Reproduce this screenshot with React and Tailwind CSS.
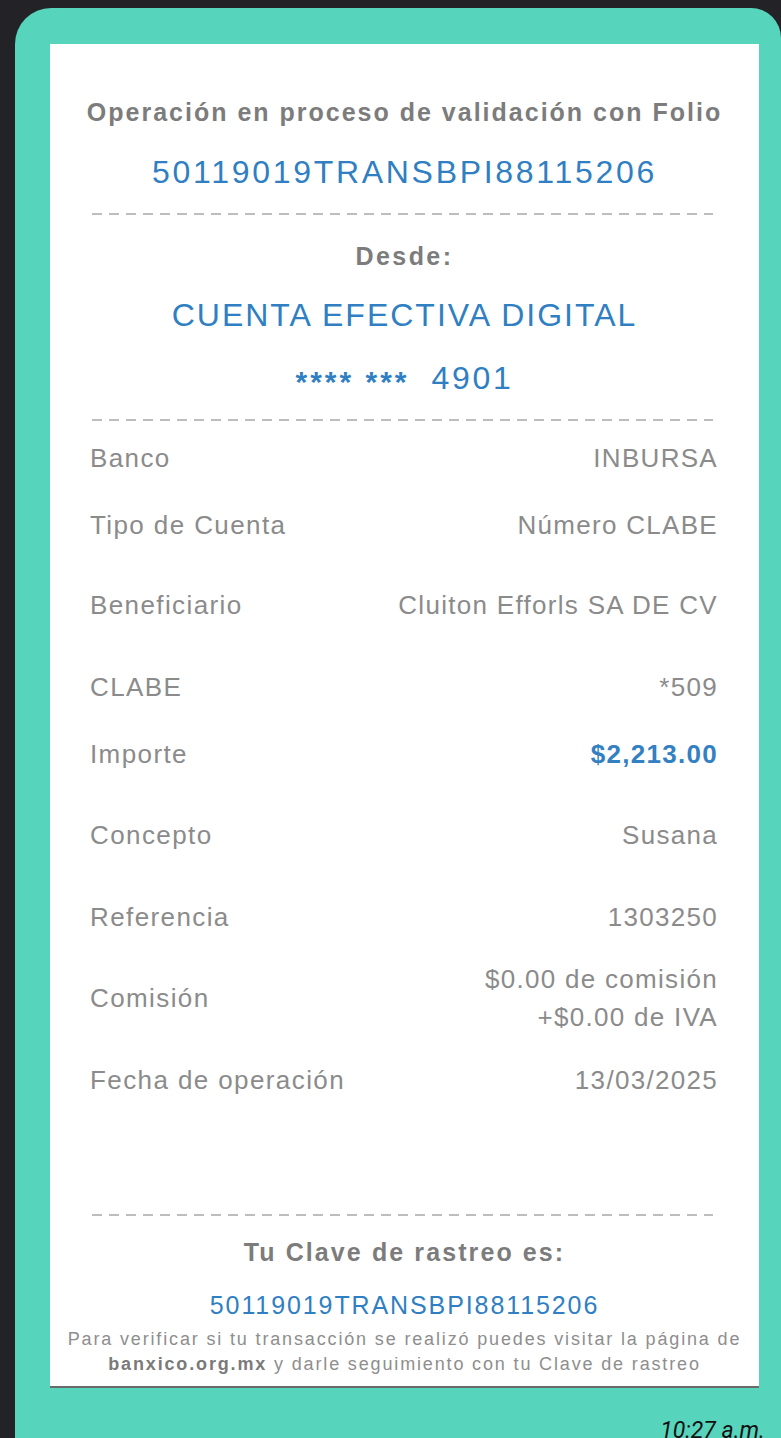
import React from "react";

const Dash = ({ className = "" }) => (
  <div
    className={
      "ml-[42px] w-[621px] h-[2px] bg-[repeating-linear-gradient(to_right,#bdbdbd_0px,#bdbdbd_10px,transparent_10px,transparent_17px)] " +
      className
    }
  />
);

const Row = ({ label, children, h, valueClass = "" }) => (
  <div className={"flex items-center justify-between pl-[40px] pr-[41px] " + h}>
    <span className="text-[26px] tracking-[1.4px] text-[#8b8b8b]">{label}</span>
    <div className={"text-right text-[26px] tracking-[1.3px] text-[#8b8b8b] " + valueClass}>
      {children}
    </div>
  </div>
);

export default function App() {
  return (
    <div
      className="w-[781px] h-[1438px] overflow-hidden bg-[#232327] pl-[15px] pt-[8px]"
      style={{ fontFamily: '"Liberation Sans", Arial, sans-serif' }}
    >
      <div className="h-[1500px] bg-[#57d4bc] rounded-tl-[36px] rounded-tr-[30px] pl-[35px] pt-[36px]">
        <div className="w-[709px] bg-white border-b-2 border-[#6a6a6a] pt-[45px] pb-[9px]">
          <div className="h-[48px] flex items-center justify-center text-[25px] font-bold tracking-[2px] text-[#7c7c7c]">
            Operación en proceso de validación con Folio
          </div>
          <div className="mt-[11px] h-[48px] flex items-center justify-center text-[32px] tracking-[2.7px] text-[#2f7fc2]">
            50119019TRANSBPI88115206
          </div>
          <Dash className="mt-[17px]" />
          <div className="mt-[22px] h-[40px] flex items-center justify-center text-[25px] font-bold tracking-[2.4px] text-[#7c7c7c]">
            Desde:
          </div>
          <div className="mt-[14px] h-[48px] flex items-center justify-center text-[32px] tracking-[2px] text-[#2f7fc2]">
            CUENTA EFECTIVA DIGITAL
          </div>
          <div className="mt-[15px] h-[48px] flex items-center justify-center text-[32px] tracking-[2.7px] text-[#2f7fc2]">
            <span className="text-[30px] font-bold tracking-[3px] translate-y-[3px]">**** ***</span>
            <span className="ml-[22px]">4901</span>
          </div>
          <Dash className="mt-[17px]" />
          <div className="mt-[4px]">
            <Row label="Banco" h="h-[66px]">INBURSA</Row>
            <Row label="Tipo de Cuenta" h="h-[68px]">Número CLABE</Row>
            <Row label="Beneficiario" h="h-[92px]">Cluiton Efforls SA DE CV</Row>
            <Row label="CLABE" h="h-[72px]">*509</Row>
            <Row label="Importe" h="h-[62px]" valueClass="!text-[#3380c2] font-semibold">
              $2,213.00
            </Row>
            <Row label="Concepto" h="h-[100px]">Susana</Row>
            <Row label="Referencia" h="h-[64px]">1303250</Row>
            <Row label="Comisión" h="h-[98px]" valueClass="leading-[38px]">
              <div>$0.00 de comisión</div>
              <div>+$0.00 de IVA</div>
            </Row>
            <Row label="Fecha de operación" h="h-[66px]">13/03/2025</Row>
          </div>
          <Dash className="mt-[101px]" />
          <div className="mt-[17px] h-[40px] flex items-center justify-center text-[25px] font-bold tracking-[2.1px] text-[#7c7c7c]">
            Tu Clave de rastreo es:
          </div>
          <div className="mt-[15px] h-[36px] flex items-center justify-center text-[25px] tracking-[1.9px] text-[#2f7fc2]">
            50119019TRANSBPI88115206
          </div>
          <div className="mt-[3px] text-center text-[18px] leading-[25px] tracking-[1.85px] text-[#8e8e8e]">
            <div>Para verificar si tu transacción se realizó puedes visitar la página de</div>
            <div>
              <span className="font-bold text-[#7a7a7a]">banxico.org.mx</span> y darle seguimiento con tu Clave de rastreo
            </div>
          </div>
        </div>
        <div
          className="mt-[30px] pr-[16px] text-right text-[23px] leading-[26px] italic text-[#111]"
          style={{ fontFamily: "Roboto, sans-serif" }}
        >
          10:27 a.m.
        </div>
      </div>
    </div>
  );
}
